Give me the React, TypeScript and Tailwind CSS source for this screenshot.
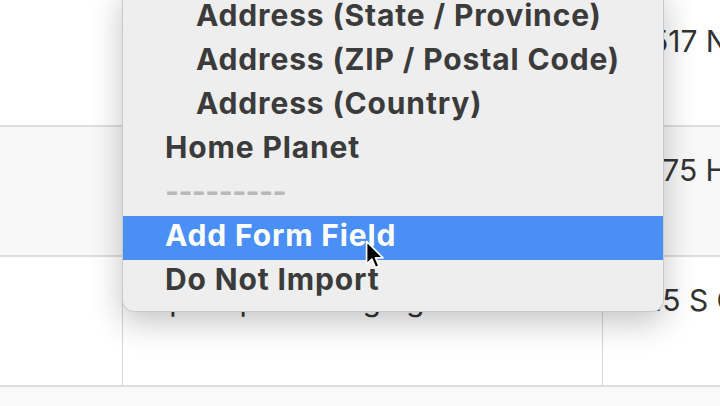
const menuItems = [
  { label: "Address (State / Province)", indent: true },
  { label: "Address (ZIP / Postal Code)", indent: true },
  { label: "Address (Country)", indent: true },
  { label: "Home Planet", indent: false },
  { label: "---------", separator: true },
  { label: "Add Form Field", active: true },
  { label: "Do Not Import" },
];

const rows = [
  { h: "h-[125px]", pt: "pt-[23px]", bg: "bg-white", mid: "", right: "517 North Orbit Rd" },
  { h: "h-[128px]", pt: "pt-[25px]", bg: "bg-[#f8f8f8]", mid: "", right: "175 Harbor Lane" },
  { h: "h-[128px]", pt: "pt-[25px]", bg: "bg-white", mid: "Spaceport Hanging Gardens", right: "15 S Crater Ave" },
];

function Cursor() {
  return (
    <svg width="22" height="31" viewBox="0 0 17 24" className="absolute left-[365px] top-[240px]">
      <path
        d="M1.2 1 L1.2 18.6 L5.3 14.8 L8.1 21.4 L10.9 20.2 L8.2 13.8 L13.9 13.8 Z"
        fill="#000"
        stroke="#fff"
        strokeWidth="1.3"
        strokeLinejoin="round"
      />
    </svg>
  );
}

export default function App() {
  return (
    <div className="relative h-[406px] w-[720px] overflow-hidden bg-white font-['Inter','Liberation_Sans',sans-serif]">
      {/* table behind the popup */}
      <div className="flex flex-col">
        {rows.map((r, i) => (
          <div key={i} className={`flex ${r.h} ${r.bg} border-b-2 border-[#dddddd] box-content`}>
            <div className="w-[123px] border-r border-[#d6d6d6]" />
            <div className={`w-[480px] border-r border-[#d6d6d6] pl-[27px] ${r.pt} text-[30px] leading-[36px] text-[#333] whitespace-nowrap overflow-hidden`}>
              {r.mid}
            </div>
            <div className={`flex-1 pl-[47px] ${r.pt} text-[30px] leading-[36px] text-[#333] whitespace-nowrap overflow-hidden`}>
              {r.right}
            </div>
          </div>
        ))}
        <div className="h-[40px] bg-[#f9f9f9]" />
      </div>

      {/* dropdown menu */}
      <div className="absolute left-[122px] top-[-12px] w-[542px] rounded-b-[12px] border border-t-0 border-[#c9c9c9] bg-[#eeeeee] pt-[8px] pb-[7px] shadow-[0_10px_32px_rgba(0,0,0,0.24)]">
        {menuItems.map((m) => (
          <div
            key={m.label}
            className={`flex h-[44px] items-center pb-[6px] text-[30px] font-bold tracking-[0.85px] whitespace-nowrap ${
              m.indent ? "pl-[73px]" : "pl-[42px]"
            } ${m.active ? "bg-[#4a8ff6] text-white" : "text-[#3b3b3b]"}`}
          >
            {m.separator ? (
              <span className="tracking-[-0.6px] text-[#b9b9b9]">{m.label}</span>
            ) : (
              m.label
            )}
          </div>
        ))}
      </div>

      <Cursor />
    </div>
  );
}
